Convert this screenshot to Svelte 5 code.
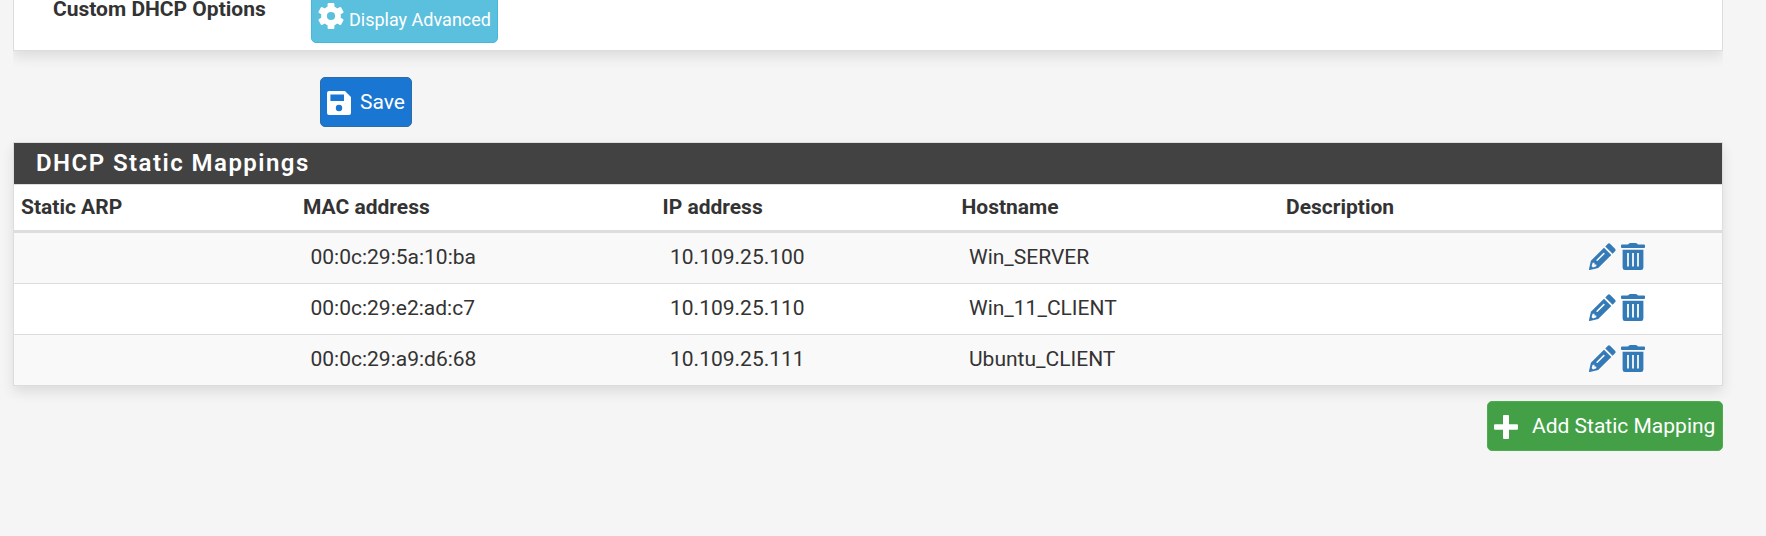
<script>
  const rows = [
    { mac: '00:0c:29:5a:10:ba', ip: '10.109.25.100', host: 'Win_SERVER' },
    { mac: '00:0c:29:e2:ad:c7', ip: '10.109.25.110', host: 'Win_11_CLIENT' },
    { mac: '00:0c:29:a9:d6:68', ip: '10.109.25.111', host: 'Ubuntu_CLIENT' }
  ];
</script>

<main>
  <div class="clip">
    <section class="panel options">
      <span class="label">Custom DHCP Options</span>
      <button class="btn info">
        <svg class="gear" viewBox="-13 -13 26 26" aria-hidden="true">
          <g fill="#fff">
            <rect x="-3.4" y="-13" width="6.8" height="26" rx="1.2" />
            <rect x="-3.4" y="-13" width="6.8" height="26" rx="1.2" transform="rotate(60)" />
            <rect x="-3.4" y="-13" width="6.8" height="26" rx="1.2" transform="rotate(120)" />
          </g>
          <circle r="7" fill="none" stroke="#fff" stroke-width="5.8" />
          <circle r="4.1" fill="#5bc0de" />
        </svg>
        <span>Display Advanced</span>
      </button>
    </section>
  </div>

  <button class="btn primary">
    <svg class="floppy" viewBox="0 0 24 24" aria-hidden="true">
      <path fill="#fff" fill-rule="evenodd" d="M2 0H18L24 6V22Q24 24 22 24H2Q0 24 0 22V2Q0 0 2 0ZM3.4 3.6V10H17V3.6ZM12 13.8a3.2 3.2 0 1 0 0 6.4a3.2 3.2 0 1 0 0-6.4Z" />
    </svg>
    <span>Save</span>
  </button>

  <section class="panel mappings">
    <h2>DHCP Static Mappings</h2>
    <table>
      <thead>
        <tr>
          <th class="c1">Static ARP</th>
          <th class="c2">MAC address</th>
          <th class="c3">IP address</th>
          <th class="c4">Hostname</th>
          <th class="c5">Description</th>
          <th></th>
        </tr>
      </thead>
      <tbody>
        {#each rows as row}
          <tr>
            <td></td>
            <td>{row.mac}</td>
            <td>{row.ip}</td>
            <td>{row.host}</td>
            <td></td>
            <td>
              <div class="actions">
                <svg class="pencil" viewBox="0 0 27 27" aria-hidden="true">
                  <path d="M16.3 3.4L18.7 1Q20 -.3 21.3 1L26 5.7Q27.3 7 26 8.3L23.6 10.7Z" />
                  <path fill-rule="evenodd" d="M15 4.7L22.3 12L9.2 25.1L.9 27Q-.1 27.1 0 26.1L1.9 17.8ZM3.7 19.7L2.6 23L4 24.4L7.3 23.3V21.5H5.5V19.7ZM7.2 17.2Q7.8 18.4 8.7 17.8L15.6 10.9Q15.8 9.6 14.5 9.8L7.5 16.7Z" />
                </svg>
                <svg class="trash" viewBox="0 0 24 27" aria-hidden="true">
                  <path fill-rule="evenodd" d="M1 1.6H7L8 .6Q8.6 0 9.4 0H14.6Q15.4 0 16 .6L17 1.6H23Q24 1.6 24 2.6V4.2Q24 5 23 5H1Q0 5 0 4.2V2.6Q0 1.6 1 1.6ZM1.6 6.8H22.4V24.5Q22.4 27 20 27H4Q1.6 27 1.6 24.5ZM6.1 10V23.6H7.9V10ZM11.1 10V23.6H12.9V10ZM16.1 10V23.6H17.9V10Z" />
                </svg>
              </div>
            </td>
          </tr>
        {/each}
      </tbody>
    </table>
  </section>

  <button class="btn success">
    <svg class="plus" viewBox="0 0 24 24" aria-hidden="true">
      <path fill="#fff" d="M9 1Q9 0 10 0H14Q15 0 15 1V9.3H23Q24 9.3 24 10.3V13.7Q24 14.7 23 14.7H15V23Q15 24 14 24H10Q9 24 9 23V14.7H1Q0 14.7 0 13.7V10.3Q0 9.3 1 9.3H9Z" />
    </svg>
    <span>Add Static Mapping</span>
  </button>
</main>

<style>
  :global(body) { background: #f5f5f5; }
  main {
    box-sizing: border-box;
    height: 536px;
    padding: 0 43px 0 13px;
    display: flex;
    flex-direction: column;
    font-family: Roboto, sans-serif;
    font-size: 21px;
    color: #333;
  }
  .panel {
    box-sizing: border-box;
    background: #fff;
    border: 1px solid #ddd;
    box-shadow: 0 6px 12px rgba(0, 0, 0, 0.1);
  }
  .clip { height: 77px; overflow: hidden; flex: none; }
  .options {
    height: 51px;
    border-top: 0;
    display: flex;
    align-items: flex-start;
  }
  .label {
    width: 258px;
    padding-left: 39px;
    line-height: 19px;
    font-weight: 700;
    white-space: nowrap;
  }
  .btn {
    box-sizing: border-box;
    flex: none;
    display: flex;
    align-items: center;
    margin: 0;
    color: #fff;
    font: 400 21px Roboto, sans-serif;
    border: 1px solid;
    border-radius: 5px;
    padding: 0 0 0 6px;
    white-space: nowrap;
  }
  .info {
    width: 187px;
    height: 49px;
    margin-top: -6px;
    background: #5bc0de;
    border-color: #46b8da;
    font-size: 18px;
  }
  .gear { width: 26px; height: 26px; margin: -5px 5px 0 0; }
  .info span { line-height: 22px; margin-top: 3px; }
  .primary {
    width: 92px;
    height: 50px;
    margin-left: 307px;
    background: #1976d2;
    border-color: #2e6da4;
  }
  .floppy { width: 24px; height: 24px; margin: 2px 9px 0 0; }
  .mappings { height: 244px; margin-top: 15px; flex: none; }
  h2 {
    box-sizing: border-box;
    margin: 0;
    height: 42px;
    padding-left: 22px;
    line-height: 41px;
    background: #424242;
    border-bottom: 1px solid #ddd;
    color: #fff;
    font-size: 24px;
    font-weight: 600;
    letter-spacing: 1.46px;
  }
  table { width: 100%; table-layout: fixed; border-collapse: separate; border-spacing: 0; }
  th {
    box-sizing: border-box;
    height: 48px;
    padding: 0 0 1px 7px;
    line-height: 30px;
    border-bottom: 3px solid #ddd;
    text-align: left;
    font-weight: 700;
  }
  .c1 { width: 282px; }
  .c2 { width: 359px; }
  .c3 { width: 299px; }
  .c4 { width: 325px; }
  .c5 { width: 295px; }
  .c3, .c4 { padding-left: 7.5px; }
  td {
    box-sizing: border-box;
    height: 51px;
    padding: 0 0 2px 15px;
    line-height: 30px;
    border-bottom: 1px solid #ddd;
  }
  td:nth-child(2) { padding-left: 14.5px; }
  tbody tr:nth-child(odd) { background: #f9f9f9; }
  tbody tr:last-child td { border-bottom: 0; height: 50px; }
  .actions { display: flex; gap: 5px; fill: #337ab7; margin-top: -1px; }
  .pencil { width: 27px; height: 27px; }
  .trash { width: 24px; height: 27px; }
  .success {
    align-self: flex-end;
    width: 236px;
    height: 50px;
    margin-top: 15px;
    background: #43a047;
    border-color: #4cae4c;
  }
  .plus { width: 24px; height: 24px; margin: 2px 14px 0 0; }
</style>
